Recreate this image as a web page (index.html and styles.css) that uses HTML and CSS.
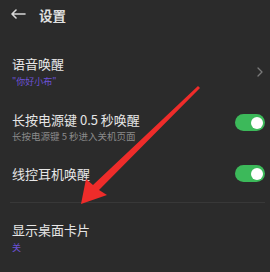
FILE: index.html
```html
<!DOCTYPE html>
<html lang="zh">
<head>
<meta charset="utf-8">
<link rel="stylesheet" href="styles.css">
</head>
<body>
<div class="screen">
  <div class="header">
    <svg class="back" width="16" height="10" viewBox="0 0 16 10"><path d="M15 5 H2 M6 1 L2 5 L6 9" fill="none" stroke="#d8d8d8" stroke-width="1.6" stroke-linecap="round" stroke-linejoin="round"/></svg>
    <span class="title">设置</span>
  </div>

  <div class="row row1">
    <div class="text">
      <div class="label">语音唤醒</div>
      <div class="sub purple">"你好小布"</div>
    </div>
    <svg class="chev" width="6" height="10" viewBox="0 0 6 10"><path d="M1 1 L5 5 L1 9" fill="none" stroke="#7a7a7a" stroke-width="1.3" stroke-linecap="round" stroke-linejoin="round"/></svg>
  </div>

  <div class="row row2">
    <div class="text">
      <div class="label short">长按电源键 0.5 秒唤醒</div>
      <div class="sub grey tight">长按电源键 5 秒进入关机页面</div>
    </div>
    <div class="toggle top"><span class="knob"></span></div>
  </div>

  <div class="row row3 center">
    <div class="text">
      <div class="label">线控耳机唤醒</div>
    </div>
    <div class="toggle"><span class="knob"></span></div>
  </div>

  <div class="divider"></div>

  <div class="row row4">
    <div class="text">
      <div class="label">显示桌面卡片</div>
      <div class="sub purple">关</div>
    </div>
  </div>

  <svg class="arrow" width="270" height="272" viewBox="0 0 270 272">
    <polygon points="81,204 86,179 93,185 198,86 200,88 99,190 107,195" fill="#ee2c2a"/>
  </svg>
</div>
</body>
</html>
```

FILE: styles.css
```css
html, body {
  margin: 0;
  padding: 0;
  background: #2b2b2b;
}
body {
  font-family: "Noto Sans CJK SC", "Noto Sans", sans-serif;
  color: #e4e4e4;
}
.screen {
  position: relative;
  width: 270px;
  height: 272px;
  overflow: hidden;
  background: #2b2b2b;
}
.header {
  height: 28px;
  display: flex;
  align-items: center;
  padding-left: 10px;
  gap: 13px;
}
.back {
  display: block;
}
.title {
  font-size: 13.5px;
  line-height: 16px;
  font-weight: 700;
  color: #e0e0e0;
  margin-top: 2px;
}
.row {
  display: flex;
  align-items: center;
  justify-content: space-between;
  padding-left: 12px;
  padding-right: 5px;
}
.row1 { padding-top: 28px; }
.row2 { padding-top: 25px; align-items: flex-start; }
.row3 { padding-top: 23px; }
.row4 { padding-top: 19px; }
.label {
  font-size: 13px;
  line-height: 16px;
  color: #e6e6e6;
  white-space: nowrap;
}
.label.short {
  line-height: 14px;
}
.sub {
  font-size: 9px;
  line-height: 12px;
  margin-top: 4px;
  white-space: nowrap;
}
.sub.tight {
  margin-top: 4px;
  line-height: 11px;
  font-size: 9.5px;
}
.purple { color: #6b52d6; }
.grey { color: #8a8a8a; }
.chev {
  display: block;
  margin-right: 2px;
}
.toggle {
  width: 30px;
  height: 17px;
  border-radius: 9px;
  background: #3cb95a;
  display: flex;
  align-items: center;
  justify-content: flex-end;
  padding-right: 2px;
  box-sizing: border-box;
}
.toggle.top { margin-top: 1px; }
.knob {
  width: 12px;
  height: 12px;
  border-radius: 50%;
  background: #ffffff;
}
.divider {
  height: 1px;
  background: #383838;
  margin: 20px 5px 0 10px;
}
.arrow {
  position: absolute;
  left: 0;
  top: 0;
  pointer-events: none;
}
```
